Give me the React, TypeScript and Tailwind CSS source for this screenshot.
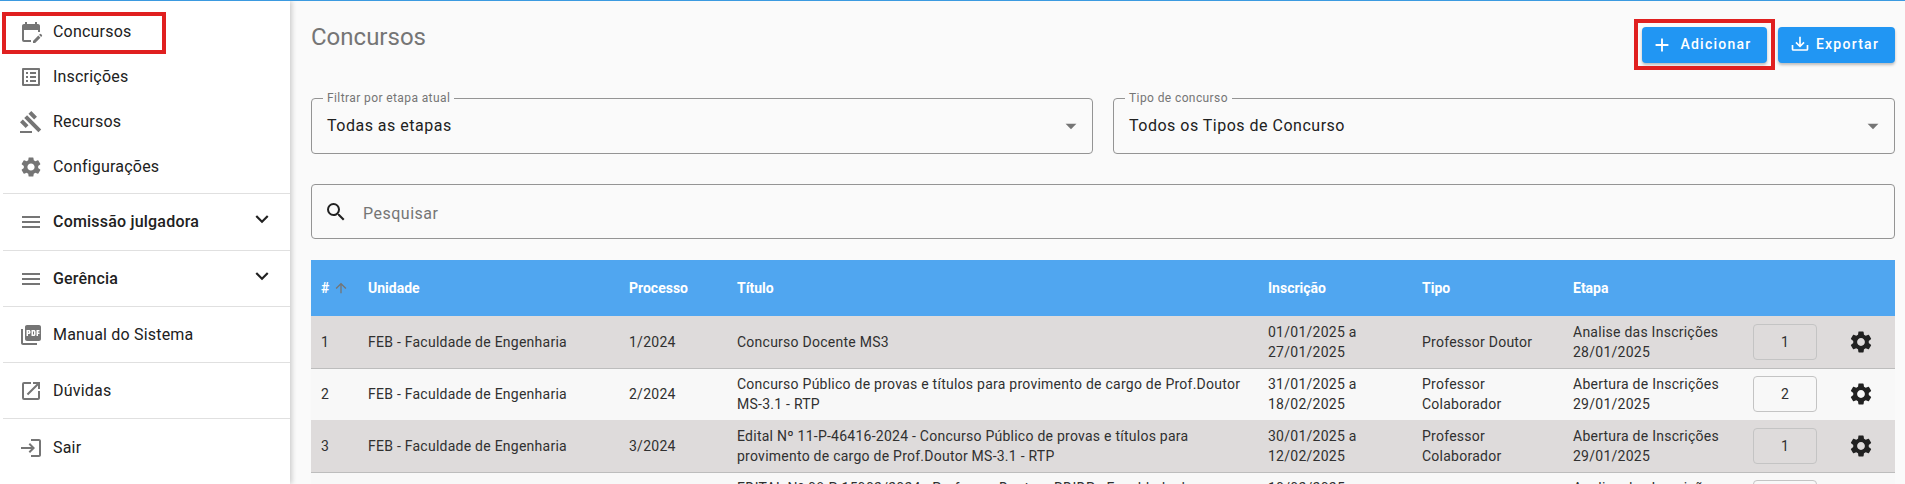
import type { ReactNode } from 'react';
import {
  MdAdd,
  MdArrowDropDown,
  MdArrowUpward,
  MdEditCalendar,
  MdExpandMore,
  MdGavel,
  MdLogin,
  MdMenu,
  MdOpenInNew,
  MdOutlineListAlt,
  MdPictureAsPdf,
  MdSearch,
  MdSettings,
} from 'react-icons/md';

interface Row {
  id: number;
  processo: string;
  titulo: string;
  inscricao: string;
  tipo: string;
  etapa: string;
  data: string;
  qtd: number;
}

const rows: Row[] = [
  { id: 1, processo: '1/2024', titulo: 'Concurso Docente MS3', inscricao: '01/01/2025 a 27/01/2025', tipo: 'Professor Doutor', etapa: 'Analise das Inscrições', data: '28/01/2025', qtd: 1 },
  { id: 2, processo: '2/2024', titulo: 'Concurso Público de provas e títulos para provimento de cargo de Prof.Doutor MS-3.1 - RTP', inscricao: '31/01/2025 a 18/02/2025', tipo: 'Professor Colaborador', etapa: 'Abertura de Inscrições', data: '29/01/2025', qtd: 2 },
  { id: 3, processo: '3/2024', titulo: 'Edital Nº 11-P-46416-2024 - Concurso Público de provas e títulos para provimento de cargo de Prof.Doutor MS-3.1 - RTP', inscricao: '30/01/2025 a 12/02/2025', tipo: 'Professor Colaborador', etapa: 'Abertura de Inscrições', data: '29/01/2025', qtd: 1 },
  { id: 4, processo: '4/2024', titulo: 'EDITAL Nº 08-P-15902/2024 - Professor Doutor - RDIDP - Faculdade de Engenharia de Bauru', inscricao: '10/02/2025 a 28/02/2025', tipo: 'Professor Efetivo', etapa: 'Analise das Inscrições', data: '03/03/2025', qtd: 1 },
];

function NavItem({ icon, label, bold, chevron }: { icon: ReactNode; label: string; bold?: boolean; chevron?: boolean }) {
  return (
    <div className="flex h-full items-center pl-[19px] pr-[15px] text-[#212121]">
      <span className="flex w-[34px] shrink-0 text-[#757575]">{icon}</span>
      <span className={`text-[16px] tracking-[0.2px] ${bold ? 'font-medium' : ''}`}>{label}</span>
      {chevron && <MdExpandMore size={26} className="ml-auto -mt-[6px] text-[#212121]" />}
    </div>
  );
}

function Sidebar() {
  return (
    <aside className="z-10 w-[290px] shrink-0 bg-white pt-[8px] shadow-[2px_0_5px_rgba(0,0,0,0.18)]">
      <div className="relative h-[45px]">
        <NavItem icon={<MdEditCalendar size={24} />} label="Concursos" />
        <div className="absolute left-[2px] top-[3px] h-[42px] w-[164px] border-[4px] border-[#e02020]" />
      </div>
      <div className="h-[45px]"><NavItem icon={<MdOutlineListAlt size={24} />} label="Inscrições" /></div>
      <div className="h-[45px]"><NavItem icon={<MdGavel size={24} />} label="Recursos" /></div>
      <div className="h-[45px]"><NavItem icon={<MdSettings size={24} />} label="Configurações" /></div>
      <div className="ml-[3px] mt-[4px] border-b border-[#e0e0e0]" />
      <div className="h-[56px]"><NavItem icon={<MdMenu size={24} />} label="Comissão julgadora" bold chevron /></div>
      <div className="ml-[3px] border-b border-[#e0e0e0]" />
      <div className="h-[55px]"><NavItem icon={<MdMenu size={24} />} label="Gerência" bold chevron /></div>
      <div className="ml-[3px] border-b border-[#e0e0e0]" />
      <div className="h-[55px]"><NavItem icon={<MdPictureAsPdf size={24} />} label="Manual do Sistema" /></div>
      <div className="ml-[3px] border-b border-[#e0e0e0]" />
      <div className="h-[55px]"><NavItem icon={<MdOpenInNew size={24} />} label="Dúvidas" /></div>
      <div className="ml-[3px] border-b border-[#e0e0e0]" />
      <div className="h-[57px]"><NavItem icon={<MdLogin size={24} />} label="Sair" /></div>
    </aside>
  );
}

function SelectField({ legend, value }: { legend: string; value: string }) {
  return (
    <fieldset className="h-[63px] min-w-0 flex-1 rounded-[4px] border border-[#949494] pl-[15px] pr-[8px]">
      <legend className="px-[4px] text-[12px] leading-[14px] tracking-[0.4px] text-[#757575] -ml-[4px]">{legend}</legend>
      <div className="mt-[8px] flex items-center justify-between text-[16px] tracking-[0.5px] text-[#212121]">
        <span>{value}</span>
        <MdArrowDropDown size={26} className="text-[#757575]" />
      </div>
    </fieldset>
  );
}

function DownloadIcon() {
  return (
    <svg width="20" height="20" viewBox="0 0 24 24" fill="currentColor">
      <path d="M2 12H4V17H20V12H22V17A2 2 0 0 1 20 19H4A2 2 0 0 1 2 17V12M12 15L17.55 9.54L16.13 8.13L13 11.25V2H11V11.25L7.88 8.13L6.46 9.55L12 15Z" />
    </svg>
  );
}

function ActionButton({ icon, label, className }: { icon: ReactNode; label: string; className: string }) {
  return (
    <button className={`flex h-[36px] items-center justify-center rounded-[4px] bg-[#2196f3] pb-[1px] text-[14px] font-medium tracking-[1.25px] text-white shadow-[0_2px_3px_rgba(0,0,0,0.25)] ${className}`}>
      {icon}
      {label}
    </button>
  );
}

function Concursos() {
  return (
    <main className="min-w-0 flex-1 bg-[#fafafa] pl-[21px] pr-[10px]">
      <div className="flex items-start justify-between pt-[26px]">
        <h1 className="-mt-[4px] text-[24px] leading-[28px] text-[#757575]">Concursos</h1>
        <div className="flex gap-[11px]">
          <div className="relative">
            <ActionButton icon={<MdAdd size={22} />} label="Adicionar" className="w-[125px] gap-[7px] pr-[6px]" />
            <div className="absolute -inset-x-[8px] -top-[8px] -bottom-[7px] border-[4px] border-[#e02020]" />
          </div>
          <ActionButton icon={<DownloadIcon />} label="Exportar" className="w-[117px] gap-[6px] pr-[4px]" />
        </div>
      </div>

      <div className="mt-[28px] flex gap-[20px]">
        <SelectField legend="Filtrar por etapa atual" value="Todas as etapas" />
        <SelectField legend="Tipo de concurso" value="Todos os Tipos de Concurso" />
      </div>

      <label className="mt-[30px] flex h-[55px] items-center rounded-[4px] border border-[#949494] pl-[12px]">
        <MdSearch size={24} className="shrink-0 text-[#212121]" />
        <input placeholder="Pesquisar" className="ml-[15px] mt-[4px] w-full bg-transparent text-[16px] tracking-[0.5px] outline-none placeholder:text-[#757575]" />
      </label>

      <table className="mt-[21px] w-full table-fixed border-collapse text-[14px] leading-[20px] tracking-[0.25px] text-[#303030]">
        <colgroup>
          <col className="w-[47px]" />
          <col className="w-[261px]" />
          <col className="w-[108px]" />
          <col className="w-[531px]" />
          <col className="w-[154px]" />
          <col className="w-[151px]" />
          <col className="w-[180px]" />
          <col className="w-[84px]" />
          <col className="w-[68px]" />
        </colgroup>
        <thead>
          <tr className="h-[56px] bg-[#50a6f0] text-left font-bold text-white">
            <th className="px-[10px] font-bold tracking-normal">
              <span className="flex items-center gap-[4px]">#<MdArrowUpward size={16} className="shrink-0 text-[#757575]" /></span>
            </th>
            <th className="px-[10px] font-bold tracking-normal">Unidade</th>
            <th className="px-[10px] font-bold tracking-normal">Processo</th>
            <th className="px-[10px] font-bold tracking-normal">Título</th>
            <th className="px-[10px] font-bold tracking-normal">Inscrição</th>
            <th className="px-[10px] font-bold tracking-normal">Tipo</th>
            <th className="px-[10px] font-bold tracking-normal">Etapa</th>
            <th />
            <th />
          </tr>
        </thead>
        <tbody>
          {rows.map((row) => (
            <tr key={row.id} className={`h-[52px] border-b border-[#bdbdbd] ${row.id % 2 === 1 ? 'bg-[#dedbdb]' : 'bg-[#f8f8f8] border-b-0'}`}>
              <td className="px-[10px]">{row.id}</td>
              <td className="px-[10px]">FEB - Faculdade de Engenharia</td>
              <td className="px-[10px]">{row.processo}</td>
              <td className="px-[10px]">{row.titulo}</td>
              <td className="px-[10px]">{row.inscricao}</td>
              <td className="px-[10px]">{row.tipo}</td>
              <td className="px-[10px]">{row.etapa}<br />{row.data}</td>
              <td className="px-[10px]">
                <div className="flex h-[36px] w-[64px] items-center justify-center rounded-[4px] border border-[#c4c4c4]">{row.qtd}</div>
              </td>
              <td className="pl-[21px]">
                <MdSettings size={26} className="text-[#212121]" />
              </td>
            </tr>
          ))}
        </tbody>
      </table>
    </main>
  );
}

export default function App() {
  return (
    <div className="flex h-screen w-full overflow-hidden border-t border-[#3b9ae0] font-['Roboto',sans-serif]">
      <Sidebar />
      <Concursos />
    </div>
  );
}
